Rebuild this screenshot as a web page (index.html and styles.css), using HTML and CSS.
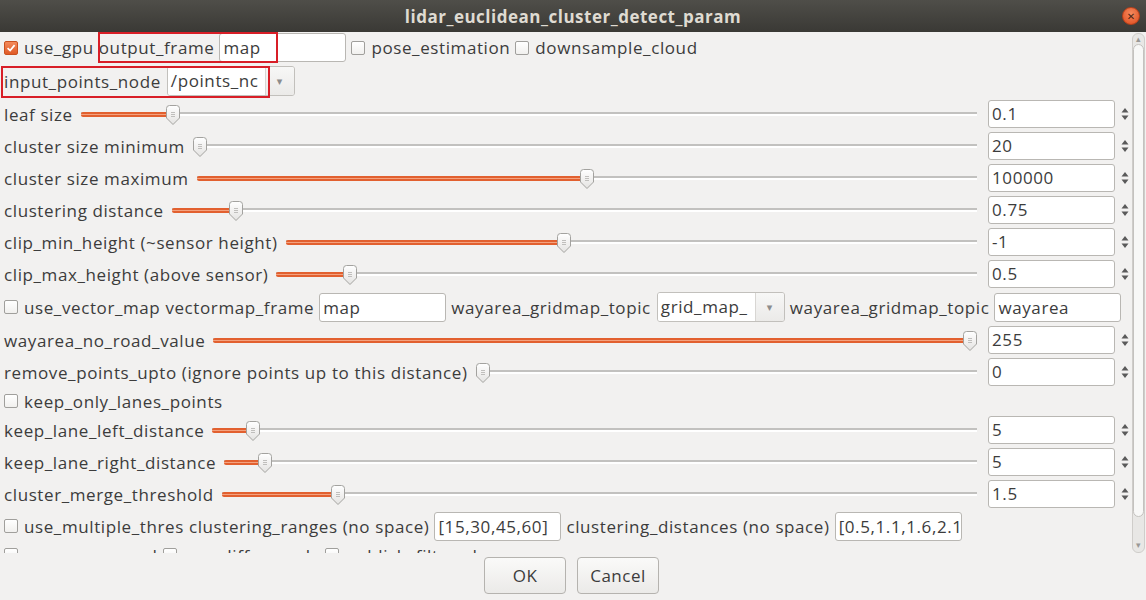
FILE: index.html
```html
<!DOCTYPE html>
<html lang="en">
<head>
    <meta charset="UTF-8">
    <title>lidar_euclidean_cluster_detect_param</title>
    <link rel="stylesheet" href="styles.css">
</head>
<body>
<svg width="0" height="0" style="position:absolute">
    <defs>
        <linearGradient id="knob" x1="0" y1="0" x2="0" y2="1">
            <stop offset="0" stop-color="#ffffff"/>
            <stop offset="1" stop-color="#e4e3e1"/>
        </linearGradient>
        <symbol id="handle" viewBox="0 0 14 20">
            <path d="M0.5 3.5 Q0.5 0.5 3.5 0.5 H10.5 Q13.5 0.5 13.5 3.5 V13 L7 19.5 L0.5 13 Z" fill="url(#knob)" stroke="#a3a29f"/>
            <path d="M5 7.5 H9 M5 9.5 H9 M5 11.5 H9" stroke="#b2b1ae" stroke-width="0.8"/>
        </symbol>
        <symbol id="updown" viewBox="0 0 8 16">
            <path d="M4 2 L7.5 6.5 H0.5 Z M4 14 L7.5 9.5 H0.5 Z" fill="#5a5a5a"/>
        </symbol>
        <symbol id="check" viewBox="0 0 14 14">
            <path d="M3 7.2 L6 10 L11.2 3.6" fill="none" stroke="#fff" stroke-width="2"/>
        </symbol>
    </defs>
</svg>

<div class="window">
    <div class="titlebar">
        <span class="title">lidar_euclidean_cluster_detect_param</span>
        <span class="close">&#x2715;</span>
    </div>

    <div class="pane">
        <div class="rows">
            <div class="row row-top">
                <label class="check"><span class="box on"><svg><use href="#check"/></svg></span>use_gpu</label>
                <span>output_frame</span>
                <span class="edit">map</span>
                <label class="check"><span class="box"></span>pose_estimation</label>
                <label class="check"><span class="box"></span>downsample_cloud</label>
            </div>
            <div class="row row-combo">
                <span>input_points_node</span>
                <span class="combo"><span class="combo-text">/points_nc</span><span class="combo-btn">&#9662;</span></span>
            </div>

            <div class="row slide-row">
                <span>leaf size</span>
                <div class="slider" style="--p:0.097"><div class="track"><div class="fill"></div></div><svg class="handle"><use href="#handle"/></svg></div>
                <span class="spin">0.1</span><svg class="arrows"><use href="#updown"/></svg>
            </div>
            <div class="row slide-row">
                <span>cluster size minimum</span>
                <div class="slider" style="--p:0"><div class="track"><div class="fill"></div></div><svg class="handle"><use href="#handle"/></svg></div>
                <span class="spin">20</span><svg class="arrows"><use href="#updown"/></svg>
            </div>
            <div class="row slide-row">
                <span>cluster size maximum</span>
                <div class="slider" style="--p:0.5"><div class="track"><div class="fill"></div></div><svg class="handle"><use href="#handle"/></svg></div>
                <span class="spin">100000</span><svg class="arrows"><use href="#updown"/></svg>
            </div>
            <div class="row slide-row">
                <span>clustering distance</span>
                <div class="slider" style="--p:0.072"><div class="track"><div class="fill"></div></div><svg class="handle"><use href="#handle"/></svg></div>
                <span class="spin">0.75</span><svg class="arrows"><use href="#updown"/></svg>
            </div>
            <div class="row slide-row">
                <span>clip_min_height (~sensor height)</span>
                <div class="slider" style="--p:0.4"><div class="track"><div class="fill"></div></div><svg class="handle"><use href="#handle"/></svg></div>
                <span class="spin">-1</span><svg class="arrows"><use href="#updown"/></svg>
            </div>
            <div class="row slide-row">
                <span>clip_max_height (above sensor)</span>
                <div class="slider" style="--p:0.097"><div class="track"><div class="fill"></div></div><svg class="handle"><use href="#handle"/></svg></div>
                <span class="spin">0.5</span><svg class="arrows"><use href="#updown"/></svg>
            </div>

            <div class="row row-edit">
                <label class="check"><span class="box"></span>use_vector_map</label>
                <span>vectormap_frame</span>
                <span class="edit">map</span>
                <span>wayarea_gridmap_topic</span>
                <span class="combo"><span class="combo-text">grid_map_</span><span class="combo-btn">&#9662;</span></span>
                <span>wayarea_gridmap_topic</span>
                <span class="edit">wayarea</span>
            </div>

            <div class="row slide-row">
                <span>wayarea_no_road_value</span>
                <div class="slider" style="--p:1"><div class="track"><div class="fill"></div></div><svg class="handle"><use href="#handle"/></svg></div>
                <span class="spin">255</span><svg class="arrows"><use href="#updown"/></svg>
            </div>
            <div class="row slide-row">
                <span>remove_points_upto (ignore points up to this distance)</span>
                <div class="slider" style="--p:0"><div class="track"><div class="fill"></div></div><svg class="handle"><use href="#handle"/></svg></div>
                <span class="spin">0</span><svg class="arrows"><use href="#updown"/></svg>
            </div>

            <div class="row row-check">
                <label class="check"><span class="box"></span>keep_only_lanes_points</label>
            </div>

            <div class="row slide-row">
                <span>keep_lane_left_distance</span>
                <div class="slider" style="--p:0.045"><div class="track"><div class="fill"></div></div><svg class="handle"><use href="#handle"/></svg></div>
                <span class="spin">5</span><svg class="arrows"><use href="#updown"/></svg>
            </div>
            <div class="row slide-row">
                <span>keep_lane_right_distance</span>
                <div class="slider" style="--p:0.046"><div class="track"><div class="fill"></div></div><svg class="handle"><use href="#handle"/></svg></div>
                <span class="spin">5</span><svg class="arrows"><use href="#updown"/></svg>
            </div>
            <div class="row slide-row">
                <span>cluster_merge_threshold</span>
                <div class="slider" style="--p:0.148"><div class="track"><div class="fill"></div></div><svg class="handle"><use href="#handle"/></svg></div>
                <span class="spin">1.5</span><svg class="arrows"><use href="#updown"/></svg>
            </div>

            <div class="row slide-row">
                <label class="check"><span class="box"></span>use_multiple_thres</label>
                <span>clustering_ranges (no space)</span>
                <span class="edit">[15,30,45,60]</span>
                <span>clustering_distances (no space)</span>
                <span class="edit">[0.5,1.1,1.6,2.1</span>
            </div>

            <!-- this row is cut by the bottom of the scroll pane -->
            <div class="row row-check">
                <label class="check"><span class="box"></span>remove_ground</label>
                <label class="check"><span class="box"></span>use_diffnormals</label>
                <label class="check"><span class="box"></span>publish_filtered</label>
            </div>
        </div>

        <div class="vscroll">
            <span class="sc-arrow">&#9652;</span>
            <div class="sc-thumb"></div>
            <span class="sc-arrow">&#9662;</span>
        </div>
    </div>

    <div class="buttons">
        <button class="btn">OK</button>
        <button class="btn">Cancel</button>
    </div>

    <!-- red annotation boxes drawn over the dialog -->
    <div class="mark mark-frame"></div>
    <div class="mark mark-node"></div>
</div>
</body>
</html>
```

FILE: styles.css
```css
* {
    box-sizing: border-box;
}

body {
    margin: 0;
    font-family: "Open Sans", "DejaVu Sans", sans-serif;
    font-size: 17px;
    letter-spacing: 0.6px;
    color: #3c3c3c;
    background-color: #f2f1f0;
}

.window {
    position: relative;
    width: 1146px;
    height: 600px;
    overflow: hidden;
}

/* Title bar */
.titlebar {
    height: 32px;
    display: grid;
    grid-template-columns: 1fr auto 1fr;
    align-items: center;
    background: linear-gradient(#4f4e49, #3a3935);
}

.title {
    grid-column: 2;
    color: #dfdbd2;
    font-weight: bold;
    font-size: 17px;
    letter-spacing: 0.5px;
}

.close {
    grid-column: 3;
    justify-self: end;
    margin-right: 6px;
    width: 18px;
    height: 18px;
    border-radius: 50%;
    background: radial-gradient(circle at 50% 35%, #f58a5e, #de4a1c);
    color: #4a2414;
    font-size: 10px;
    letter-spacing: 0;
    line-height: 16px;
    text-align: center;
    border: 1px solid #b8401a;
}

/* Scroll pane */
.pane {
    display: flex;
    height: 521px;
    overflow: hidden;
}

.rows {
    flex: 1;
    display: flex;
    flex-direction: column;
    gap: 4px;
    padding: 1px 0 0 4px;
    white-space: nowrap;
}

.row {
    display: flex;
    align-items: center;
    gap: 5px;
    flex-shrink: 0;
}

.row-top { height: 29px; }
.row-combo { height: 30px; }
.slide-row { height: 28px; }
.row-edit { height: 30px; }
.row-check { height: 22px; gap: 6px; }

.check {
    display: flex;
    align-items: center;
    gap: 6px;
}

.box {
    width: 14px;
    height: 14px;
    border: 1px solid #a09f9c;
    border-radius: 2px;
    background: linear-gradient(#ffffff, #f1f0ee);
}

.box.on {
    border-color: #c9511f;
    background: linear-gradient(#f38a5b, #e05a26);
}

.box svg {
    display: block;
    width: 12px;
    height: 12px;
}

.edit {
    width: 127px;
    height: 29px;
    padding: 0 3px;
    line-height: 27px;
    background: #fff;
    border: 1px solid #b9b7b3;
    border-radius: 3px;
    overflow: hidden;
}

.combo {
    display: flex;
    width: 128px;
    height: 30px;
    margin-left: 1px;
    border: 1px solid #c2c0bc;
    border-radius: 3px;
    overflow: hidden;
}

.combo-text {
    flex: 1;
    overflow: hidden;
    padding-left: 3px;
    line-height: 28px;
    background: #fff;
}

.combo-btn {
    width: 29px;
    text-align: center;
    line-height: 28px;
    font-size: 11px;
    color: #8c8c8c;
    background: linear-gradient(#f7f7f6, #ebeae8);
    border-left: 1px solid #d8d6d3;
}

/* Sliders */
.slider {
    flex: 1;
    position: relative;
    height: 28px;
    display: flex;
    align-items: center;
    margin: 0 3px;
}

.track {
    flex: 1;
    height: 5px;
    background: linear-gradient(#c2c1bf 0, #c2c1bf 2px, #ffffff 2px, #ffffff 4px, transparent 4px);
}

.fill {
    height: 5px;
    width: calc(7px + (100% - 14px) * var(--p));
    background: #f4a27f;
    border-top: 2px solid #e2602f;
    border-bottom: 2px solid #e2602f;
    border-radius: 2px;
}

.handle {
    position: absolute;
    top: 5px;
    left: calc((100% - 14px) * var(--p));
    width: 14px;
    height: 20px;
}

.spin {
    width: 127px;
    height: 28px;
    margin-left: 3px;
    padding: 0 3px;
    line-height: 26px;
    background: #fff;
    border: 1px solid #b9b7b3;
    border-radius: 3px;
}

.arrows {
    width: 8px;
    height: 16px;
    margin: 0 3px 0 1px;
}

/* Vertical scrollbar */
.vscroll {
    width: 13px;
    margin: 1px 1px 0 0;
    display: flex;
    flex-direction: column;
    align-items: center;
    background: #e8e7e5;
    border: 1px solid #cfcdca;
    border-radius: 6px;
}

.sc-arrow {
    font-size: 9px;
    line-height: 10px;
    color: #9a9996;
}

.sc-thumb {
    width: 11px;
    height: 473px;
    background: #f8f8f7;
    border: 1px solid #c4c2bf;
    border-radius: 6px;
    margin-bottom: 23px;
}

/* Dialog buttons */
.buttons {
    display: flex;
    justify-content: center;
    gap: 11px;
    padding: 4px 0 0 0;
    margin-left: -3px;
}

.btn {
    width: 82px;
    height: 37px;
    font-family: inherit;
    font-size: 17px;
    letter-spacing: 0.5px;
    color: #3c3c3c;
    background: linear-gradient(#fafaf9, #ebeae8);
    border: 1px solid #b5b3af;
    border-radius: 4px;
}

/* Annotation frames */
.mark {
    position: absolute;
    border: 2px solid #d81e27;
}

.mark-frame {
    left: 98px;
    top: 32px;
    width: 180px;
    height: 31px;
}

.mark-node {
    left: 1px;
    top: 66px;
    width: 269px;
    height: 32px;
}
```
